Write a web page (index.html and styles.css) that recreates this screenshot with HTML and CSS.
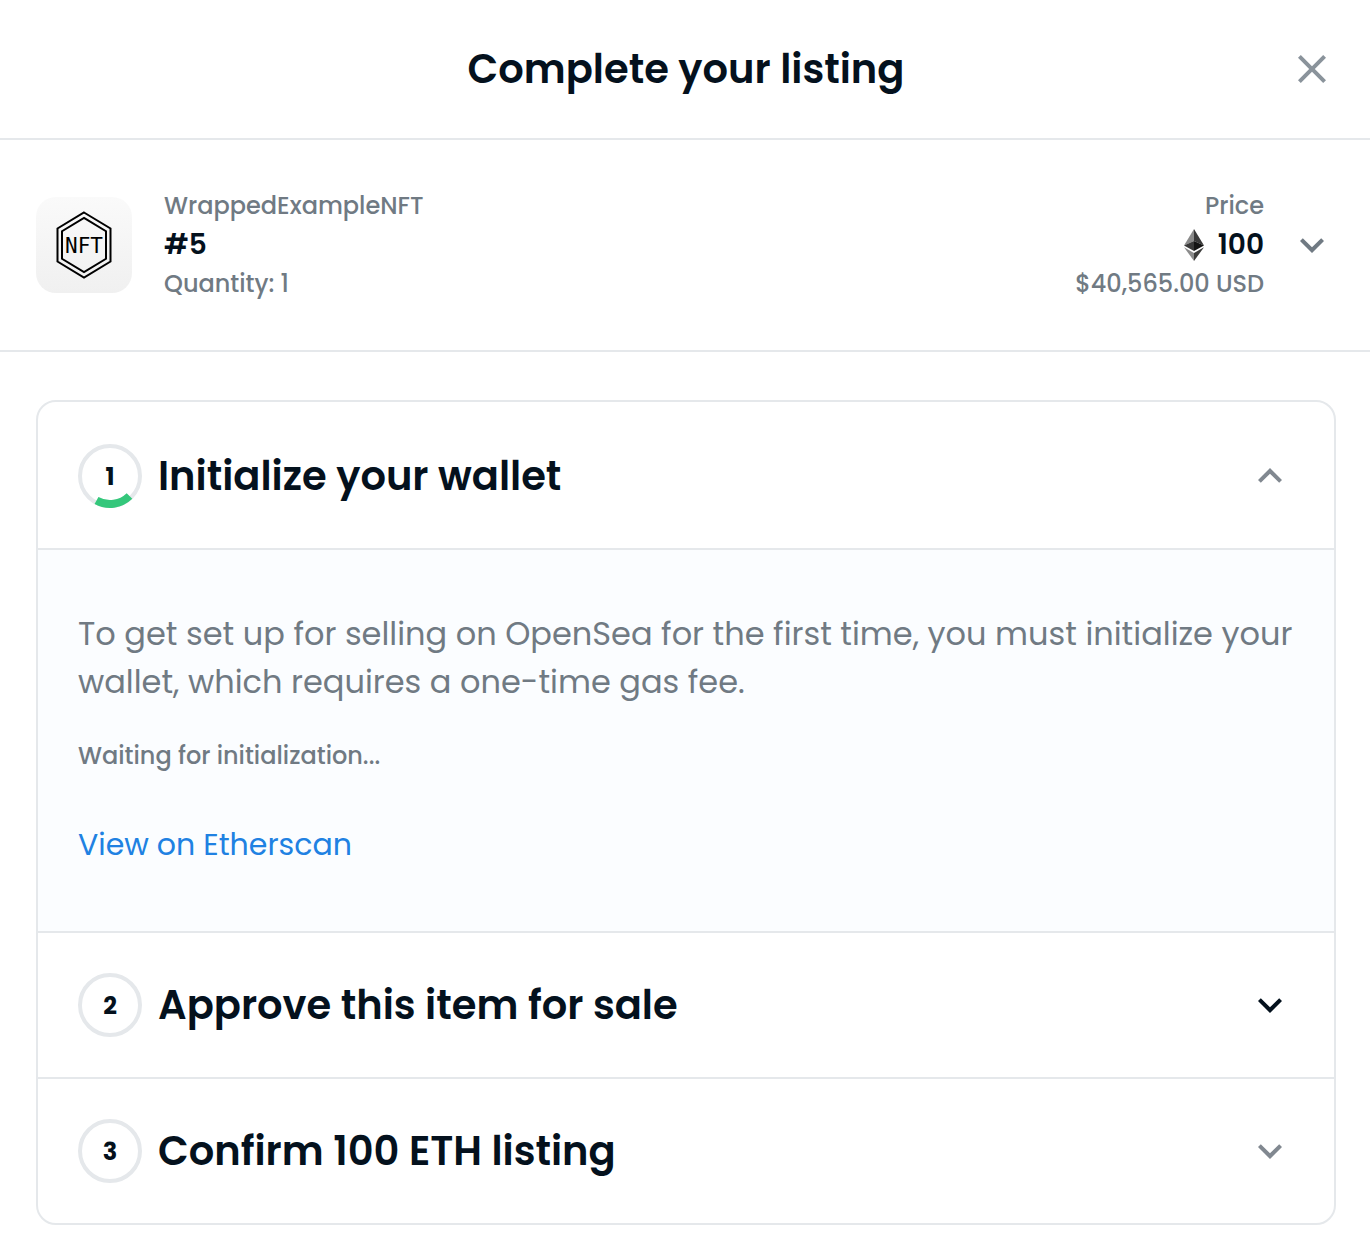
FILE: index.html
```
<!DOCTYPE html>
<html lang="en">
<head>
    <meta charset="UTF-8">
    <meta name="viewport" content="width=device-width, initial-scale=1.0">
    <title>Complete your listing</title>
    <link rel="stylesheet" href="styles.css">
</head>
<body>
    <header class="modal-header">
        <h1>Complete your listing</h1>
        <button type="button" class="icon-button close" aria-label="Close">
            <svg class="icon" viewBox="0 0 24 24"><path d="M19 6.41L17.59 5 12 10.59 6.41 5 5 6.41 10.59 12 5 17.59 6.41 19 12 13.41 17.59 19 19 17.59 13.41 12z"/></svg>
        </button>
    </header>

    <section class="item">
        <svg class="item-image" viewBox="0 0 96 96" role="img" aria-label="NFT">
            <defs>
                <linearGradient id="thumb" x1="0" y1="0" x2="0" y2="1">
                    <stop offset="0" stop-color="#fafafa"/>
                    <stop offset="1" stop-color="#f0f0f0"/>
                </linearGradient>
            </defs>
            <rect width="96" height="96" rx="20" fill="url(#thumb)"/>
            <path d="M48 15.5L74.5 31.5V64.5L48 80.5L21.5 64.5V31.5Z" fill="none" stroke="#000" stroke-width="2"/>
            <path d="M48 20.8L70 34.2V61.8L48 75.2L26 61.8V34.2Z" fill="none" stroke="#000" stroke-width="2"/>
            <text class="item-image-text" x="48" y="56" text-anchor="middle">NFT</text>
        </svg>
        <div class="item-info">
            <div class="muted">WrappedExampleNFT</div>
            <div class="strong">#5</div>
            <div class="muted">Quantity: 1</div>
        </div>
        <div class="item-price">
            <div class="muted">Price</div>
            <div class="strong amount">
                <svg class="eth" viewBox="0 0 20 32" role="img" aria-label="ETH">
                    <path d="M10 0L0 16.5L10 12Z" fill="#8a8a8a"/>
                    <path d="M10 0L20 16.5L10 12Z" fill="#393939"/>
                    <path d="M10 12L0 16.5L10 22Z" fill="#393939"/>
                    <path d="M10 12L20 16.5L10 22Z" fill="#141414"/>
                    <path d="M0 18.3L10 32V24Z" fill="#8c8c8c"/>
                    <path d="M20 18.3L10 32V24Z" fill="#3c3c3b"/>
                </svg>
                100
            </div>
            <div class="muted">$40,565.00 USD</div>
        </div>
        <button type="button" class="icon-button" aria-label="Show price details">
            <svg class="icon" viewBox="0 0 24 24"><path d="M16.59 8.59L12 13.17 7.41 8.59 6 10l6 6 6-6z"/></svg>
        </button>
    </section>

    <main class="steps">
        <section class="step active">
            <h2>
                <button type="button" class="step-header" aria-expanded="true" aria-controls="step-1">
                    <span class="step-number">
                        1
                        <svg class="spinner" viewBox="0 0 64 64"><path d="M18.5 56.5A28 28 0 0 0 51.5 52"/></svg>
                    </span>
                    <span class="step-title">Initialize your wallet</span>
                    <svg class="icon light" viewBox="0 0 24 24"><path d="M12 8l-6 6 1.41 1.41L12 10.83l4.59 4.58L18 14z"/></svg>
                </button>
            </h2>
            <div class="step-panel" id="step-1">
                <p class="description">To get set up for selling on OpenSea for the first time, you must initialize your wallet, which requires a one-time gas fee.</p>
                <p class="status">Waiting for initialization...</p>
                <a href="#">View on Etherscan</a>
            </div>
        </section>
        <section class="step">
            <h2>
                <button type="button" class="step-header" aria-expanded="false">
                    <span class="step-number">2</span>
                    <span class="step-title">Approve this item for sale</span>
                    <svg class="icon dark" viewBox="0 0 24 24"><path d="M16.59 8.59L12 13.17 7.41 8.59 6 10l6 6 6-6z"/></svg>
                </button>
            </h2>
        </section>
        <section class="step">
            <h2>
                <button type="button" class="step-header" aria-expanded="false">
                    <span class="step-number">3</span>
                    <span class="step-title">Confirm 100 ETH listing</span>
                    <svg class="icon light" viewBox="0 0 24 24"><path d="M16.59 8.59L12 13.17 7.41 8.59 6 10l6 6 6-6z"/></svg>
                </button>
            </h2>
        </section>
    </main>
</body>
</html>
```
FILE: styles.css
```
* {
    box-sizing: border-box;
}

body {
    font-family: Poppins, Inter, sans-serif;
    color: #04111d;
    background-color: #ffffff;
    margin: 0;
}

h1,
h2,
p {
    margin: 0;
}

button {
    font: inherit;
    color: inherit;
    background: none;
    border: none;
    padding: 0;
    cursor: pointer;
}

.icon {
    display: block;
    flex: none;
    width: 48px;
    height: 48px;
    fill: #707a83;
}

.icon.light {
    fill: #818890;
}

.icon.dark {
    fill: #04111d;
}

/* Header */
.modal-header {
    display: grid;
    grid-template-columns: 48px 1fr 48px;
    align-items: center;
    padding: 39px 34px 39px 36px;
    border-bottom: 2px solid #e5e8eb;
}

.modal-header h1 {
    grid-column: 2;
    font-size: 40px;
    line-height: 60px;
    font-weight: 600;
    text-align: center;
}

.close .icon {
    fill: #8a939b;
}

/* Item summary */
.item {
    display: flex;
    align-items: center;
    padding: 46px 34px 47px 36px;
    border-bottom: 2px solid #e5e8eb;
}

.item-image {
    flex: none;
    width: 96px;
    height: 96px;
    margin-right: 32px;
}

.item-image-text {
    font-family: "DejaVu Sans Mono", monospace;
    font-size: 21px;
}

.item-info {
    flex: 1;
}

.item-price {
    text-align: right;
    margin-right: 24px;
}

.muted {
    font-size: 24px;
    line-height: 39px;
    font-weight: 500;
    color: #707a83;
}

.strong {
    font-size: 28px;
    line-height: 39px;
    font-weight: 600;
}

.amount {
    display: flex;
    justify-content: flex-end;
    align-items: center;
    gap: 14px;
}

.eth {
    width: 20px;
    height: 32px;
}

/* Steps */
.steps {
    margin: 48px 34px 28px 36px;
    border: 2px solid #e5e8eb;
    border-radius: 20px;
    overflow: hidden;
}

.step + .step {
    border-top: 2px solid #e5e8eb;
}

.step-header {
    display: flex;
    align-items: center;
    gap: 16px;
    width: 100%;
    padding: 40px;
    text-align: left;
}

.active .step-header {
    padding-top: 42px;
}

.step-number {
    position: relative;
    display: flex;
    flex: none;
    justify-content: center;
    align-items: center;
    width: 64px;
    height: 64px;
    border: 4px solid #e5e8eb;
    border-radius: 50%;
    font-size: 24px;
    font-weight: 700;
}

.spinner {
    position: absolute;
    inset: -4px;
    width: 64px;
    height: 64px;
    fill: none;
    stroke: #34c77b;
    stroke-width: 8px;
}

.step-title {
    flex: 1;
    font-size: 40px;
    line-height: 60px;
    font-weight: 600;
}

.step-panel {
    padding: 60px 40px 62px;
    background-color: #fbfdff;
    border-top: 2px solid #e5e8eb;
    color: #707a83;
}

.description {
    font-size: 32px;
    line-height: 48px;
    margin-bottom: 32px;
}

.status {
    font-size: 24px;
    line-height: 36px;
    font-weight: 500;
    margin-bottom: 47px;
}

.step-panel a {
    display: inline-block;
    font-size: 30px;
    line-height: 48px;
    color: #2081e2;
    text-decoration: none;
}
```
